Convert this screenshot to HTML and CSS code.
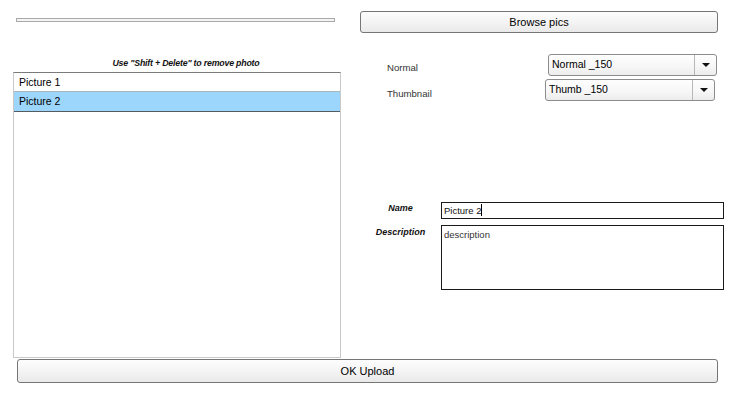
FILE: index.html
```html
<!DOCTYPE html>
<html>
<head>
<meta charset="utf-8">
<link rel="stylesheet" href="styles.css">
</head>
<body>
<div class="app">
  <div class="main">
    <div class="left">
      <div class="progress"></div>
      <div class="hint">Use "Shift + Delete" to remove photo</div>
      <div class="list">
        <div class="row">Picture 1</div>
        <div class="row selected">Picture 2</div>
      </div>
    </div>
    <div class="right">
      <div class="btn browse">Browse pics</div>
      <div class="opt opt-normal">
        <div class="opt-label">Normal</div>
        <div class="combo">
          <div class="combo-text">Normal _150</div>
          <div class="combo-arrow"><span class="tri"></span></div>
        </div>
      </div>
      <div class="opt opt-thumb">
        <div class="opt-label">Thumbnail</div>
        <div class="combo">
          <div class="combo-text">Thumb _150</div>
          <div class="combo-arrow"><span class="tri"></span></div>
        </div>
      </div>
      <div class="field field-name">
        <div class="field-label">Name</div>
        <div class="input">Picture 2<span class="caret"></span></div>
      </div>
      <div class="field field-desc">
        <div class="field-label">Description</div>
        <div class="input textarea">description</div>
      </div>
    </div>
  </div>
  <div class="footer">
    <div class="btn upload">OK Upload</div>
  </div>
</div>
</body>
</html>
```

FILE: styles.css
```css
html, body {
  margin: 0;
  padding: 0;
  background: #ffffff;
}
body {
  width: 735px;
  height: 402px;
  overflow: hidden;
  font-family: "Liberation Sans", Arial, sans-serif;
  color: #000;
}
.app {
  display: flex;
  flex-direction: column;
}
.main {
  display: flex;
  align-items: flex-start;
  padding-left: 13px;
  height: 358px;
}
.left {
  width: 328px;
  display: flex;
  flex-direction: column;
  padding-top: 18px;
}
.progress {
  margin-left: 3px;
  width: 317px;
  height: 2px;
  border: 1px solid #a9a9a9;
  background: #f4f4f4;
}
.hint {
  margin-top: 35px;
  height: 12px;
  line-height: 12px;
  font-size: 8.8px;
  font-weight: bold;
  font-style: italic;
  text-align: center;
  letter-spacing: -0.2px;
  padding-left: 18px;
  color: #111;
}
.list {
  margin-top: 3px;
  height: 284px;
  border: 1px solid #c9c9c9;
  border-top-color: #7a7a7a;
  background: #fff;
}
.row {
  height: 18px;
  line-height: 18px;
  padding-left: 5px;
  font-size: 10.5px;
  color: #000;
}
.row.selected {
  height: 19px;
  line-height: 19px;
  background: #9dd6fc;
  border-top: 1px solid #aab6be;
  border-bottom: 1px solid #545c62;
}
.right {
  margin-left: 19px;
  width: 364px;
  display: flex;
  flex-direction: column;
  padding-top: 11px;
}
.btn {
  box-sizing: border-box;
  height: 22px;
  line-height: 20px;
  border: 1px solid #767676;
  border-radius: 3px;
  background: linear-gradient(#fdfdfd, #f3f3f3 55%, #e9e9e9);
  text-align: center;
  font-size: 11px;
  color: #000;
}
.browse {
  width: 358px;
}
.opt {
  display: flex;
  align-items: flex-start;
  height: 22px;
}
.opt-normal {
  margin-top: 21px;
}
.opt-thumb {
  margin-top: 3px;
}
.opt-label {
  margin-left: 27px;
  font-size: 9.6px;
  line-height: 12px;
  color: #333;
}
.opt-normal .opt-label {
  padding-top: 8px;
}
.opt-thumb .opt-label {
  padding-top: 9px;
}
.combo {
  box-sizing: border-box;
  display: flex;
  height: 22px;
  border: 1px solid #8c8c8c;
  border-radius: 3px;
  background: linear-gradient(#fefefe, #f6f6f6 60%, #ececec);
}
.opt-normal .combo {
  margin-left: auto;
  margin-right: 7px;
  width: 169px;
}
.opt-thumb .combo {
  margin-left: auto;
  margin-right: 9px;
  width: 170px;
}
.combo-text {
  flex: 1;
  padding-left: 3px;
  line-height: 19px;
  font-size: 10.5px;
}
.combo-arrow {
  width: 21px;
  border-left: 1px solid #b8b8b8;
  display: flex;
  align-items: center;
  justify-content: center;
}
.tri {
  width: 0;
  height: 0;
  border-left: 4px solid transparent;
  border-right: 4px solid transparent;
  border-top: 4px solid #111;
}
.field {
  display: flex;
  align-items: flex-start;
}
.field-name {
  margin-top: 101px;
}
.field-desc {
  margin-top: 6px;
}
.field-label {
  width: 81px;
  text-align: center;
  font-size: 9px;
  line-height: 11px;
  font-weight: bold;
  font-style: italic;
  color: #111;
}
.field-name .field-label {
  padding-top: 1px;
}
.field-desc .field-label {
  padding-top: 2px;
}
.input {
  box-sizing: border-box;
  width: 283px;
  height: 17px;
  border: 1px solid #1a1a1a;
  padding-left: 2px;
  font-size: 9.5px;
  line-height: 15px;
  color: #111;
}
.caret {
  display: inline-block;
  width: 1px;
  height: 12px;
  background: #000;
  vertical-align: -2px;
  margin-left: -1px;
}
.textarea {
  height: 65px;
  line-height: 15px;
  padding-top: 1px;
  color: #333;
}
.footer {
  padding-left: 17px;
  margin-top: 1px;
}
.upload {
  width: 701px;
  height: 24px;
  line-height: 22px;
}
```
